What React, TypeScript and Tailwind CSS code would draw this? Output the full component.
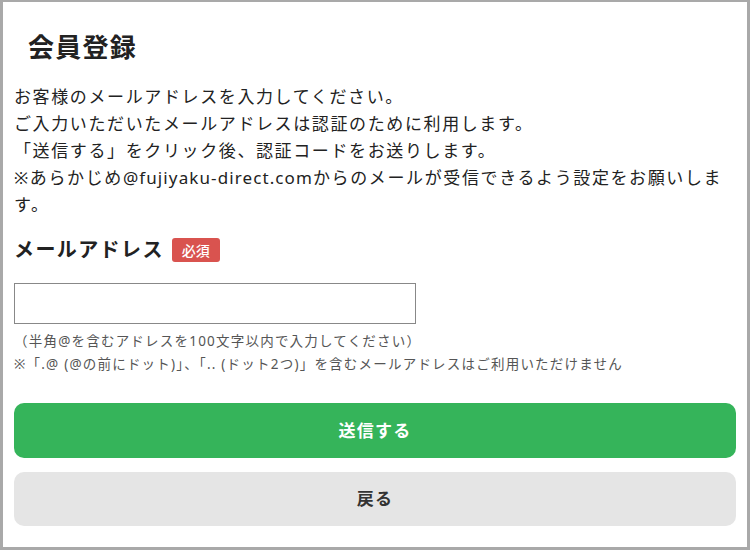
import React from 'react'

const App: React.FC = () => {
    return (
        <div className="w-[750px] h-[550px] overflow-hidden bg-white border-[#a9a9a9] border-t-2 border-l-[3px] border-r-[3px] border-b-[3px] px-[11px] font-['Noto_Sans','Noto_Sans_CJK_JP',sans-serif] tracking-[0.08em] text-[#222]">
            <h1 className="mt-[27px] pl-[14px] text-[26px] font-bold leading-[36px]">会員登録</h1>
            <div className="mt-[18px] text-[17px] leading-[27px] tracking-[0.095em]">
                <p>お客様のメールアドレスを入力してください。</p>
                <p>ご入力いただいたメールアドレスは認証のために利用します。</p>
                <p>「送信する」をクリック後、認証コードをお送りします。</p>
                <p>※あらかじめ<span className="tracking-[0.065em]">@fujiyaku-direct.com</span>からのメールが受信できるよう設定をお願いします。</p>
            </div>
            <div className="mt-[18px] flex items-center gap-2 h-[28px]">
                <span className="text-[20px] font-bold leading-[28px] tracking-[0.07em]">メールアドレス</span>
                <span className="bg-[#d9534f] text-white text-[14px] font-medium rounded-[3px] w-[48px] h-[24px] flex items-center justify-center tracking-normal">必須</span>
            </div>
            <input
                type="email"
                className="mt-[19px] block w-[402px] h-[41px] border border-[#888] px-2 outline-none"
            />
            <div className="mt-[6px] text-[13.5px] leading-[23px] text-[#555] tracking-[0.09em]">
                <p>（半角@を含むアドレスを100文字以内で入力してください）</p>
                <p>※「.@ (@の前にドット)」、「.. (ドット2つ)」を含むメールアドレスはご利用いただけません</p>
            </div>
            <button className="mt-[27px] w-full h-[55px] rounded-[10px] bg-[#35b45a] text-white text-[17px] font-bold">
                送信する
            </button>
            <button className="mt-[14px] w-full h-[54px] rounded-[10px] bg-[#e5e5e5] text-[#333] text-[17px] font-bold">
                戻る
            </button>
        </div>
    )
}

export default App
